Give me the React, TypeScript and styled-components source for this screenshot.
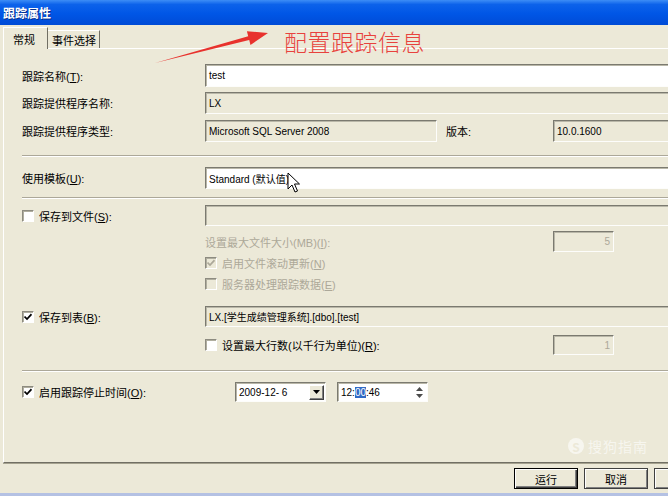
import React from 'react';
import styled, { createGlobalStyle, css } from 'styled-components';

const uiFont = `"Liberation Sans", "Noto Sans CJK SC", sans-serif`;

const GlobalStyle = createGlobalStyle`
  html, body {
    margin: 0;
    padding: 0;
    overflow: hidden;
    background: #ece9d8;
  }
  body {
    font-family: ${uiFont};
    font-size: 11px;
    color: #000;
  }
`;

const Window = styled.div`
  position: relative;
  width: 726px;
  height: 496px;
  box-sizing: border-box;
  display: flex;
  flex-direction: column;
  background: #ece9d8;
  border-bottom: 3px solid #b4c1e3;
`;

const TitleBar = styled.div`
  flex: none;
  height: 25px;
  display: flex;
  align-items: center;
  padding-left: 3px;
  color: #fff;
  font-weight: bold;
  font-size: 12px;
  background: linear-gradient(to bottom, #3d8df6 0%, #0c62ea 18%, #0056e6 55%, #004bd6 100%);
  text-shadow: 1px 1px 0 #0a2f8a;
`;

const Tabs = styled.div`
  flex: none;
  height: 23px;
  display: flex;
  align-items: flex-end;
  padding-left: 3px;
`;

const Tab = styled.div<{ $active?: boolean; $w: number }>`
  box-sizing: border-box;
  width: ${(p) => p.$w}px;
  display: flex;
  align-items: center;
  border-right: 1px solid #716f64;
  position: relative;
  ${(p) =>
    p.$active
      ? css`
          height: 22px;
          padding-left: 9px;
          border-top: 1px solid #fff;
          border-left: 1px solid #fff;
          margin-bottom: -1px;
          z-index: 1;
          background: #ece9d8;
        `
      : css`
          height: 18px;
          padding-left: 4px;
          border-top: 1px solid #fff;
        `}
`;

const Panel = styled.div`
  flex: none;
  height: 415px;
  box-sizing: border-box;
  margin-left: 3px;
  border-top: 1px solid #fff;
  border-left: 1px solid #fff;
  border-bottom: 1px solid #716f64;
  box-shadow: 0 1px 0 #a5a28f;
`;

const Form = styled.div`
  padding: 15px 0 0 18px;
  display: flex;
  flex-direction: column;
`;

const Row = styled.div<{ $h: number; $mt: number }>`
  display: grid;
  grid-template-columns: 183px 1fr;
  align-items: center;
  height: ${(p) => p.$h}px;
  margin-top: ${(p) => p.$mt}px;
`;

const SubRow = styled.div<{ $h: number; $mt: number }>`
  display: grid;
  grid-template-columns: 183px 348px 61px;
  align-items: center;
  height: ${(p) => p.$h}px;
  margin-top: ${(p) => p.$mt}px;
`;

const Label = styled.span<{ $disabled?: boolean }>`
  white-space: nowrap;
  color: ${(p) => (p.$disabled ? '#aca899' : '#000')};
`;

const Field = styled.div<{ $white?: boolean; $w?: number; $right?: boolean; $muted?: boolean }>`
  box-sizing: border-box;
  height: 100%;
  ${(p) => (p.$w ? `width: ${p.$w}px; flex: none;` : 'flex: 1; min-width: 0;')}
  display: flex;
  align-items: center;
  justify-content: ${(p) => (p.$right ? 'flex-end' : 'flex-start')};
  padding: 0 3px;
  border-style: solid;
  border-width: 1px;
  border-color: #7b7a70 #fdfdfb #fdfdfb #7b7a70;
  box-shadow: inset 1px 1px 0 #b9b7a8;
  background: ${(p) => (p.$white ? '#fff' : '#ece9d8')};
  color: ${(p) => (p.$muted ? '#aca899' : '#000')};
  white-space: nowrap;
  overflow: hidden;
  font-size: 10px;
`;

const FieldLine = styled.div`
  display: flex;
  align-items: center;
  height: 100%;
`;

const SideLabel = styled.span`
  width: 116px;
  flex: none;
  padding-left: 9px;
  box-sizing: border-box;
`;

const Separator = styled.div<{ $mt: number }>`
  margin-top: ${(p) => p.$mt}px;
  height: 0;
  border-top: 1px solid #aca899;
  border-bottom: 1px solid #fff;
`;

const Check = styled.span<{ $disabled?: boolean }>`
  box-sizing: border-box;
  width: 12px;
  height: 12px;
  flex: none;
  display: inline-flex;
  align-items: center;
  justify-content: center;
  border-style: solid;
  border-width: 1px;
  border-color: #8d8b80 #fff #fff #8d8b80;
  box-shadow: inset 1px 1px 0 #b0ae9f;
  background: ${(p) => (p.$disabled ? '#ece9d8' : '#fff')};
`;

const CheckLabel = styled.label<{ $disabled?: boolean }>`
  display: flex;
  align-items: center;
  gap: 5px;
  white-space: nowrap;
  color: ${(p) => (p.$disabled ? '#aca899' : '#000')};
`;

const PickerLine = styled.div`
  display: flex;
  align-items: center;
  height: 100%;
  gap: 11px;
  padding-left: 30px;
`;

const Picker = styled.div`
  box-sizing: border-box;
  width: 91px;
  height: 100%;
  display: flex;
  align-items: center;
  justify-content: space-between;
  padding: 0 1px 0 3px;
  background: #fff;
  border-style: solid;
  border-width: 1px;
  border-color: #7b7a70 #fdfdfb #fdfdfb #7b7a70;
  box-shadow: inset 1px 1px 0 #b9b7a8;
  font-size: 10px;
`;

const DropButton = styled.span`
  box-sizing: border-box;
  width: 15px;
  height: 15px;
  display: flex;
  align-items: center;
  justify-content: center;
  background: #ece9d8;
  border-style: solid;
  border-width: 1px;
  border-color: #fff #404040 #404040 #fff;
  box-shadow: inset -1px -1px 0 #808080;
`;

const Spin = styled.span`
  width: 13px;
  height: 14px;
  display: flex;
  flex-direction: column;
  align-items: center;
  justify-content: space-around;
  opacity: 0.7;
`;

const Selected = styled.span`
  background: #316ac5;
  color: #fff;
`;

const ButtonBar = styled.div`
  display: flex;
  justify-content: flex-end;
  gap: 6px;
  padding: 5px 8px 0 0;
`;

const Button = styled.button<{ $default?: boolean }>`
  box-sizing: border-box;
  width: 64px;
  height: 21px;
  padding: 0;
  font-family: ${uiFont};
  font-size: 11px;
  color: #000;
  background: #ece9d8;
  border: 1px solid ${(p) => (p.$default ? '#000' : '#404040')};
  box-shadow: ${(p) =>
    p.$default
      ? 'inset 1px 1px 0 #fff, inset -1px -1px 0 #404040, inset -2px -2px 0 #808080'
      : 'inset 1px 1px 0 #fff, inset -1px -1px 0 #808080'};
`;

const Annotation = styled.div`
  position: absolute;
  left: 284px;
  top: 24px;
  color: #e8423d;
  font-family: "Noto Sans CJK SC", sans-serif;
  font-size: 23px;
  font-weight: 300;
  letter-spacing: 0.5px;
`;

const Overlay = styled.svg`
  position: absolute;
  left: 0;
  top: 0;
  pointer-events: none;
`;

const Watermark = styled.div`
  position: absolute;
  left: 568px;
  top: 436px;
  display: flex;
  align-items: center;
  gap: 4px;
  color: rgba(255, 255, 255, 0.6);
  font-family: "Noto Sans CJK SC", sans-serif;
  font-size: 14px;
  letter-spacing: 1px;
`;

const WaterLogo = styled.span`
  width: 16px;
  height: 16px;
  border-radius: 50%;
  background: rgba(255, 255, 255, 0.6);
  color: #ece9d8;
  font-size: 12px;
  font-weight: bold;
  display: flex;
  align-items: center;
  justify-content: center;
  letter-spacing: 0;
`;

function Tick({ color = '#000' }: { color?: string }) {
  return (
    <svg width="8" height="8" viewBox="0 0 8 8">
      <path d="M0.5 3.5 L3 6 L7.5 1.2" fill="none" stroke={color} strokeWidth="1.7" />
    </svg>
  );
}

function Arrow({ up }: { up?: boolean }) {
  return (
    <svg width="7" height="4" viewBox="0 0 7 4">
      <path d={up ? 'M0 4 L3.5 0 L7 4 Z' : 'M0 0 L7 0 L3.5 4 Z'} fill="#000" />
    </svg>
  );
}

export default function App() {
  return (
    <Window>
      <GlobalStyle />
      <TitleBar>跟踪属性</TitleBar>
      <Tabs>
        <Tab $active $w={45}>常规</Tab>
        <Tab $w={52}>事件选择</Tab>
      </Tabs>
      <Panel>
        <Form>
          <Row $h={23} $mt={0}>
            <Label>
              跟踪名称(<u>T</u>):
            </Label>
            <Field $white>test</Field>
          </Row>
          <Row $h={22} $mt={5}>
            <Label>跟踪提供程序名称:</Label>
            <Field>LX</Field>
          </Row>
          <Row $h={22} $mt={6}>
            <Label>跟踪提供程序类型:</Label>
            <FieldLine>
              <Field $w={232}>Microsoft SQL Server 2008</Field>
              <SideLabel>版本:</SideLabel>
              <Field>10.0.1600</Field>
            </FieldLine>
          </Row>
          <Separator $mt={13} />
          <Row $h={22} $mt={10}>
            <Label>
              使用模板(<u>U</u>):
            </Label>
            <Field $white>Standard (默认值)</Field>
          </Row>
          <Separator $mt={8} />
          <Row $h={21} $mt={6}>
            <CheckLabel>
              <Check />
              <span>
                保存到文件(<u>S</u>):
              </span>
            </CheckLabel>
            <Field />
          </Row>
          <SubRow $h={21} $mt={5}>
            <span />
            <Label $disabled>
              设置最大文件大小(MB)(<u>I</u>):
            </Label>
            <Field $right $muted>
              5
            </Field>
          </SubRow>
          <SubRow $h={21} $mt={0}>
            <span />
            <CheckLabel $disabled>
              <Check $disabled>
                <Tick color="#aca899" />
              </Check>
              <span>
                启用文件滚动更新(<u>N</u>)
              </span>
            </CheckLabel>
          </SubRow>
          <SubRow $h={21} $mt={0}>
            <span />
            <CheckLabel $disabled>
              <Check $disabled />
              <span>
                服务器处理跟踪数据(<u>E</u>)
              </span>
            </CheckLabel>
          </SubRow>
          <Row $h={21} $mt={12}>
            <CheckLabel>
              <Check>
                <Tick />
              </Check>
              <span>
                保存到表(<u>B</u>):
              </span>
            </CheckLabel>
            <Field>LX.[学生成绩管理系统].[dbo].[test]</Field>
          </Row>
          <SubRow $h={20} $mt={8}>
            <span />
            <CheckLabel>
              <Check />
              <span>
                设置最大行数(以千行为单位)(<u>R</u>):
              </span>
            </CheckLabel>
            <Field $right $muted>
              1
            </Field>
          </SubRow>
          <Separator $mt={15} />
          <Row $h={20} $mt={10}>
            <CheckLabel>
              <Check>
                <Tick />
              </Check>
              <span>
                启用跟踪停止时间(<u>O</u>):
              </span>
            </CheckLabel>
            <PickerLine>
              <Picker>
                <span>2009-12- 6</span>
                <DropButton>
                  <Arrow />
                </DropButton>
              </Picker>
              <Picker>
                <span>
                  12:<Selected>00</Selected>:46
                </span>
                <Spin>
                  <Arrow up />
                  <Arrow />
                </Spin>
              </Picker>
            </PickerLine>
          </Row>
        </Form>
      </Panel>
      <ButtonBar>
        <Button $default>运行</Button>
        <Button>取消</Button>
        <Button aria-label="帮助" />
      </ButtonBar>

      <Watermark>
        <WaterLogo>S</WaterLogo>
        搜狗指南
      </Watermark>

      <Annotation>配置跟踪信息</Annotation>
      <Overlay width="668" height="496" viewBox="0 0 668 496">
        <polygon
          points="155,63 249.2,40 250.5,44.9 268,33 246.9,31.3 248.2,36.2"
          fill="#e8322d"
        />
        <path
          d="M288 173 L288 189 L292 185 L295 192 L297.5 191 L294.5 184 L299.5 184 Z"
          fill="#fff"
          stroke="#000"
          strokeWidth="1"
          strokeLinejoin="round"
        />
      </Overlay>
    </Window>
  );
}
